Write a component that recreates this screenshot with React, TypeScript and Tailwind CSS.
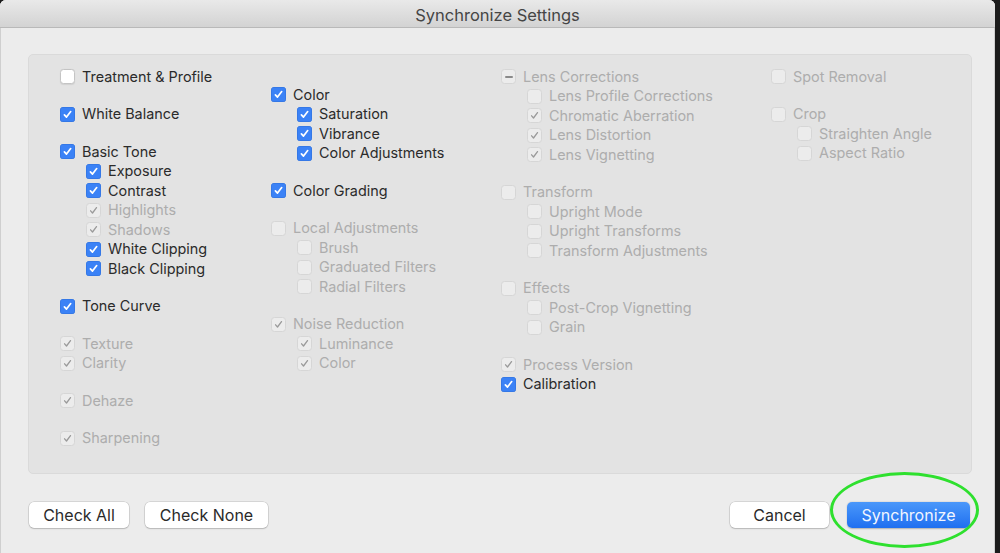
import React from 'react'

type State = 'on' | 'off' | 'mixed'
type Item = { label: string; state: State; disabled?: boolean; children?: Item[] }

const on = (label: string, disabled = false, children?: Item[]): Item => ({ label, state: 'on', disabled, children })
const off = (label: string, disabled = false, children?: Item[]): Item => ({ label, state: 'off', disabled, children })

const columns: { offset: boolean; groups: Item[][] }[] = [
  {
    offset: false,
    groups: [
      [off('Treatment & Profile')],
      [on('White Balance')],
      [
        on('Basic Tone', false, [
          on('Exposure'),
          on('Contrast'),
          on('Highlights', true),
          on('Shadows', true),
          on('White Clipping'),
          on('Black Clipping'),
        ]),
      ],
      [on('Tone Curve')],
      [on('Texture', true), on('Clarity', true)],
      [on('Dehaze', true)],
      [on('Sharpening', true)],
    ],
  },
  {
    offset: true,
    groups: [
      [on('Color', false, [on('Saturation'), on('Vibrance'), on('Color Adjustments')])],
      [on('Color Grading')],
      [off('Local Adjustments', true, [off('Brush', true), off('Graduated Filters', true), off('Radial Filters', true)])],
      [on('Noise Reduction', true, [on('Luminance', true), on('Color', true)])],
    ],
  },
  {
    offset: false,
    groups: [
      [
        {
          label: 'Lens Corrections',
          state: 'mixed',
          disabled: true,
          children: [
            off('Lens Profile Corrections', true),
            on('Chromatic Aberration', true),
            on('Lens Distortion', true),
            on('Lens Vignetting', true),
          ],
        },
      ],
      [off('Transform', true, [off('Upright Mode', true), off('Upright Transforms', true), off('Transform Adjustments', true)])],
      [off('Effects', true, [off('Post-Crop Vignetting', true), off('Grain', true)])],
      [on('Process Version', true), on('Calibration')],
    ],
  },
  {
    offset: false,
    groups: [
      [off('Spot Removal', true)],
      [off('Crop', true, [off('Straighten Angle', true), off('Aspect Ratio', true)])],
    ],
  },
]

function Box({ state, disabled }: { state: State; disabled?: boolean }) {
  if (state === 'on' && !disabled) {
    return (
      <span className="flex h-[15px] w-[15px] shrink-0 items-center justify-center rounded-[3.5px] bg-[#3b82f6] shadow-[inset_0_0_0_0.5px_#2f6fd8]">
        <svg width="11" height="11" viewBox="0 0 11 11">
          <path d="M2.4 5.9 L4.5 8.1 L8.7 2.6" fill="none" stroke="#fff" strokeWidth="1.7" strokeLinecap="round" strokeLinejoin="round" />
        </svg>
      </span>
    )
  }
  if (!disabled) {
    return <span className="h-[15px] w-[15px] shrink-0 rounded-[3.5px] border border-[#c4c4c4] bg-white shadow-[0_0.5px_1px_rgba(0,0,0,0.08)]" />
  }
  return (
    <span className="flex h-[15px] w-[15px] shrink-0 items-center justify-center rounded-[3.5px] border border-[#d6d6d6] bg-[#ececec]">
      {state === 'on' && (
        <svg width="11" height="11" viewBox="0 0 11 11">
          <path d="M2.6 5.8 L4.5 8 L8.5 2.6" fill="none" stroke="#9a9a9a" strokeWidth="1.3" strokeLinecap="round" strokeLinejoin="round" />
        </svg>
      )}
      {state === 'mixed' && <span className="h-[2px] w-[8px] rounded-sm bg-[#8a8a8a]" />}
    </span>
  )
}

function Row({ item, indent }: { item: Item; indent?: boolean }) {
  return (
    <div className={`flex h-[19.5px] items-center gap-[7px] ${indent ? 'pl-[26px]' : ''}`}>
      <Box state={item.state} disabled={item.disabled} />
      <span className={`whitespace-nowrap text-[14.4px] leading-none ${item.disabled ? 'text-[#adadad]' : 'text-[#2b2b2b]'}`}>
        {item.label}
      </span>
    </div>
  )
}

function Btn({ label, primary, w }: { label: string; primary?: boolean; w: string }) {
  return (
    <button
      className={`flex h-[26px] items-center justify-center rounded-[5px] text-[16px] ${w} ${
        primary
          ? 'bg-gradient-to-b from-[#4a97fa] to-[#1f6ff0] text-[#f2f6ff] shadow-[0_0.5px_1.5px_rgba(0,0,0,0.25)]'
          : 'bg-white text-[#2a2a2a] shadow-[0_0_0_0.5px_rgba(0,0,0,0.18),0_1px_1.5px_rgba(0,0,0,0.15)]'
      }`}
    >
      {label}
    </button>
  )
}

export default function App() {
  return (
    <div className="relative flex h-[553px] w-[1000px] overflow-hidden bg-[#1b1b1b]" style={{ fontFamily: 'Inter, "Liberation Sans", sans-serif' }}>
      <div className="flex h-[560px] w-[995px] flex-col overflow-hidden rounded-[6px] bg-[#ececec] shadow-[inset_0_0_0_1px_#cfcfcf]">
        <div className="flex h-[28px] shrink-0 items-center justify-center border-b border-[#b9b9b9] bg-gradient-to-b from-[#e9e9e9] to-[#d3d3d3] pt-[3px] text-[16.5px] text-[#454545]">
          Synchronize Settings
        </div>
        <div className="flex flex-col pl-[28px] pr-[23px] pt-[26px]">
          <div className="grid h-[420px] grid-cols-[211px_230px_270px_1fr] rounded-[5px] border border-[#dadada] bg-[#e3e3e3] pl-[31px] pt-[12px]">
            {columns.map((col, ci) => (
              <div key={ci} className={`flex flex-col gap-[18px] ${col.offset ? 'pt-[18px]' : ''}`}>
                {col.groups.map((g, gi) => (
                  <div key={gi} className="flex flex-col">
                    {g.map((item, ii) => (
                      <React.Fragment key={ii}>
                        <Row item={item} />
                        {item.children?.map((c, k) => <Row key={k} item={c} indent />)}
                      </React.Fragment>
                    ))}
                  </div>
                ))}
              </div>
            ))}
          </div>
          <div className="mt-[28px] flex items-center">
            <div className="flex gap-[16px] pl-[1px]">
              <Btn label="Check All" w="w-[100px]" />
              <Btn label="Check None" w="w-[123px]" />
            </div>
            <div className="ml-auto flex gap-[18px] pr-[2px]">
              <Btn label="Cancel" w="w-[99px]" />
              <Btn label="Synchronize" primary w="w-[123px]" />
            </div>
          </div>
        </div>
      </div>
      <div className="pointer-events-none absolute left-[830px] top-[472px] h-[76px] w-[149px] rounded-[50%] border-[3px] border-[#2ee02e]" />
    </div>
  )
}
